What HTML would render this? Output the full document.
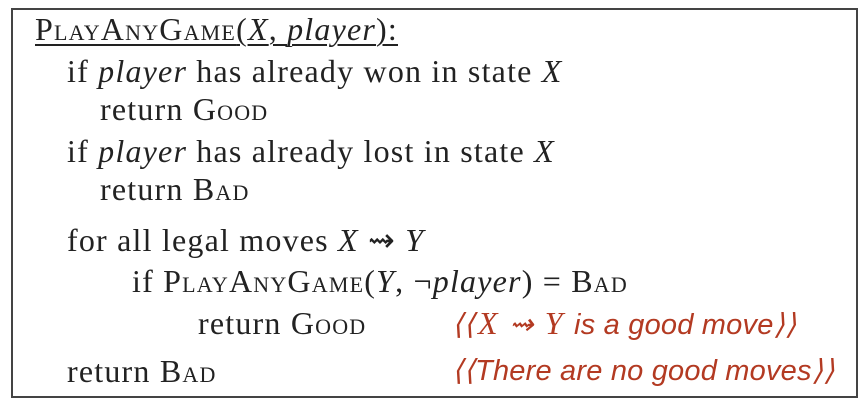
<!DOCTYPE html>
<html><head><meta charset="utf-8"><style>
body{margin:0;width:868px;height:406px;background:#fff;position:relative;overflow:hidden}
.box{position:absolute;left:11px;top:8px;width:843px;height:386px;border:2px solid #444}
.l{position:absolute;font-family:"Liberation Serif",serif;font-size:32px;line-height:32px;letter-spacing:1.2px;color:#222;white-space:nowrap}
.sc{font-variant:small-caps}
i{font-style:italic}
.c{position:absolute;font-family:"Liberation Sans",sans-serif;font-style:italic;font-size:29px;line-height:32px;letter-spacing:0.2px;color:#b33a22;white-space:nowrap}
.c i.m{font-family:"Liberation Serif",serif;font-size:32px;margin:0 3px}
</style></head><body>
<div class="box"></div>
<div class="l" style="left:35px;top:13px;text-decoration:underline;text-decoration-thickness:1.5px;text-underline-offset:4px"><span class="sc">PlayAnyGame</span>(<i>X</i>, <i>player</i>):</div>
<div class="l" style="left:67px;top:55px">if <i>player</i> has already won in state <i>X</i></div>
<div class="l" style="left:100px;top:93px">return <span class="sc">Good</span></div>
<div class="l" style="left:67px;top:135px">if <i>player</i> has already lost in state <i>X</i></div>
<div class="l" style="left:100px;top:173px">return <span class="sc">Bad</span></div>
<div class="l" style="left:67px;top:224px">for all legal moves <i>X</i> ⇝ <i>Y</i></div>
<div class="l" style="left:132px;top:265px">if <span class="sc">PlayAnyGame</span>(<i>Y</i>, ¬<i>player</i>) = <span class="sc">Bad</span></div>
<div class="l" style="left:198px;top:307px">return <span class="sc">Good</span></div>
<div class="c" style="left:452px;top:307px">⟨⟨<i class="m">X</i> ⇝ <i class="m">Y</i> is a good move⟩⟩</div>
<div class="l" style="left:67px;top:355px">return <span class="sc">Bad</span></div>
<div class="c" style="left:452px;top:355px">⟨⟨There are no good moves⟩⟩</div>
</body></html>
